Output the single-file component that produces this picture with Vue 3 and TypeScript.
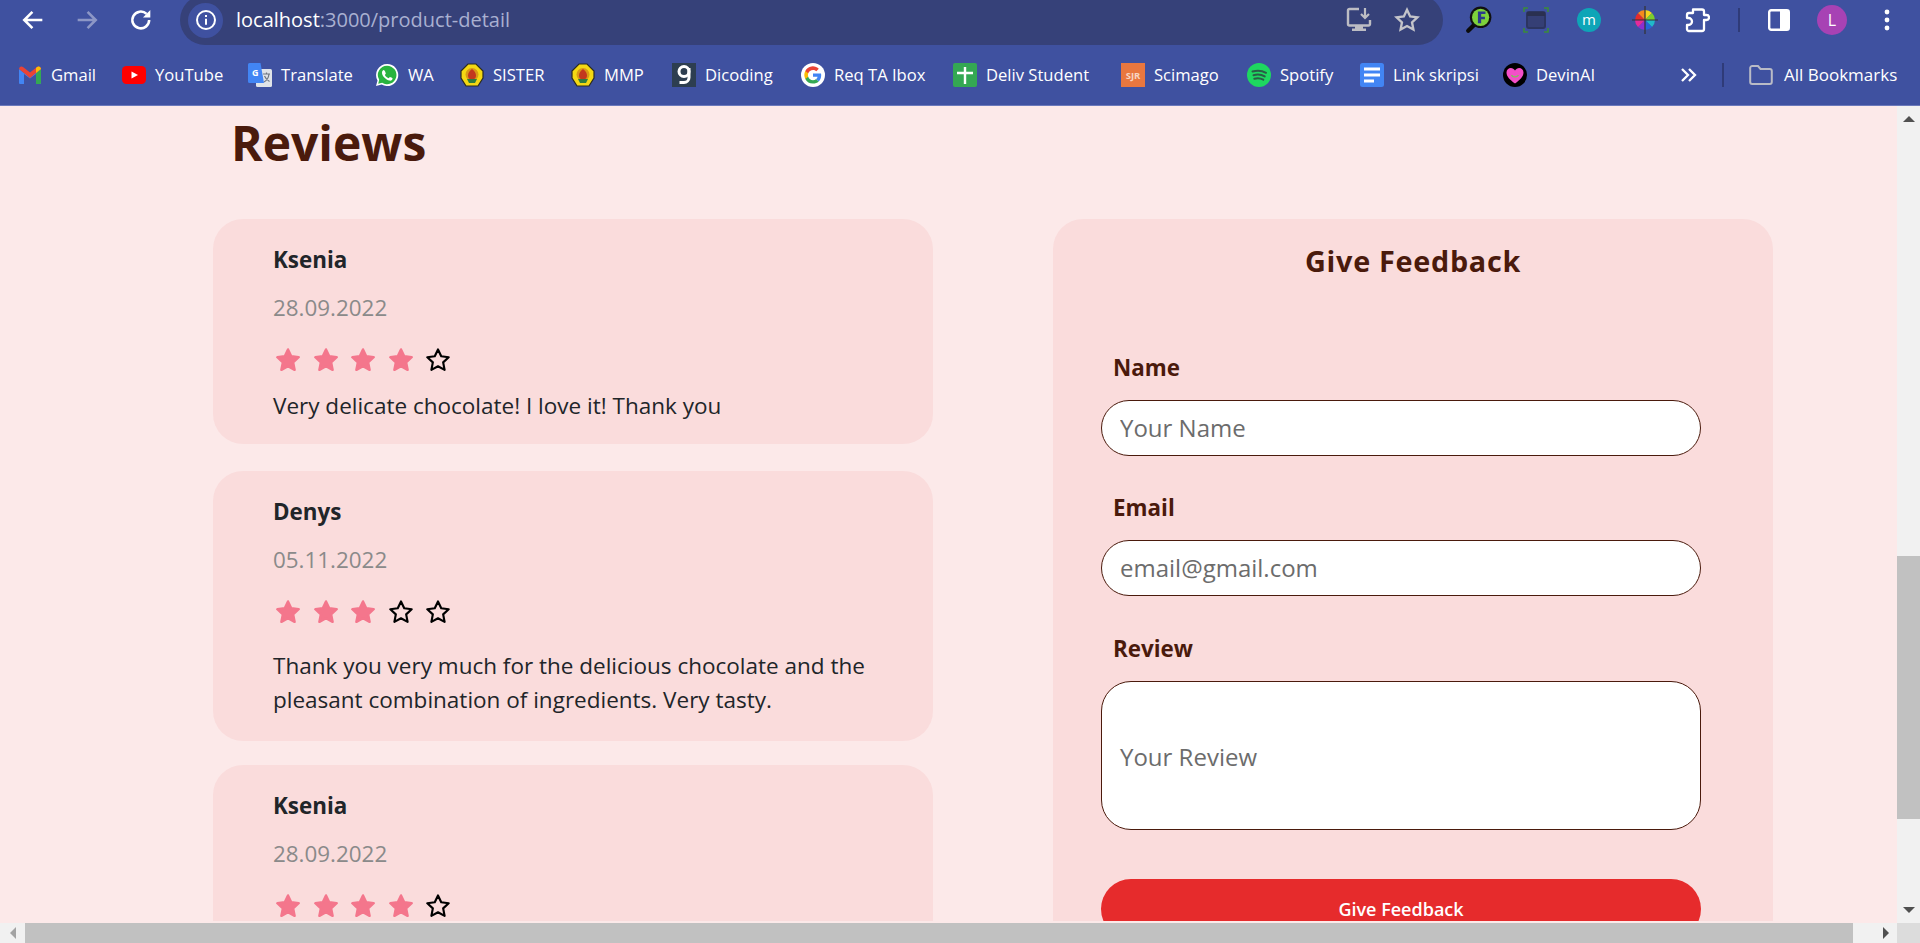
<script setup lang="ts">
interface Bookmark {
  label: string
  icon: string
  width: number
}

interface Review {
  name: string
  date: string
  rating: number
  text?: string
  wrapped?: boolean
}

const bookmarks: Bookmark[] = [
  { label: 'Gmail', icon: 'gmail', width: 104 },
  { label: 'YouTube', icon: 'youtube', width: 126 },
  { label: 'Translate', icon: 'translate', width: 127 },
  { label: 'WA', icon: 'whatsapp', width: 85 },
  { label: 'SISTER', icon: 'emblem', width: 111 },
  { label: 'MMP', icon: 'emblem', width: 101 },
  { label: 'Dicoding', icon: 'dicoding', width: 129 },
  { label: 'Req TA Ibox', icon: 'google', width: 152 },
  { label: 'Deliv Student', icon: 'cross', width: 168 },
  { label: 'Scimago', icon: 'sjr', width: 126 },
  { label: 'Spotify', icon: 'spotify', width: 113 },
  { label: 'Link skripsi', icon: 'docs', width: 143 },
  { label: 'DevinAI', icon: 'devin', width: 100 }
]

// the third card runs under the bottom of the window, its comment is never on screen
const reviews: Review[] = [
  { name: 'Ksenia', date: '28.09.2022', rating: 4, text: 'Very delicate chocolate! I love it! Thank you' },
  {
    name: 'Denys',
    date: '05.11.2022',
    rating: 3,
    text: 'Thank you very much for the delicious chocolate and the pleasant combination of ingredients. Very tasty.',
    wrapped: true
  },
  { name: 'Ksenia', date: '28.09.2022', rating: 4 }
]

const starPath = 'M12 3.2l2.7 5.7 6.2.8-4.6 4.3 1.2 6.2L12 17.2l-5.5 3 1.2-6.2-4.6-4.3 6.2-.8z'
</script>

<template>
  <div class="browser">
    <header class="toolbar">
      <div class="nav-buttons">
        <svg class="nav-icon" viewBox="0 0 24 24"><path d="M20 12H5M11.5 5L4.5 12l7 7" fill="none" stroke="#fff" stroke-width="2.2" /></svg>
        <svg class="nav-icon" viewBox="0 0 24 24"><path d="M4 12h15M12.5 5l7 7-7 7" fill="none" stroke="#8d97c6" stroke-width="2.2" /></svg>
        <svg class="nav-icon" viewBox="0 0 24 24"><path d="M19 12a7.2 7.2 0 1 1-2.2-5.2" fill="none" stroke="#fff" stroke-width="2.2" /><path d="M20 3.5v6.3h-6.3z" fill="#fff" /></svg>
      </div>
      <div class="address">
        <span class="site-info">
          <svg width="22" height="22" viewBox="0 0 22 22"><circle cx="11" cy="11" r="9" fill="none" stroke="#fff" stroke-width="2" /><path d="M11 9.8v6M11 6v2" stroke="#fff" stroke-width="2" /></svg>
        </span>
        <span class="url"><span class="host">localhost</span>:3000/product-detail</span>
        <svg class="addr-install" width="28" height="28" viewBox="0 0 28 28"><path d="M14 3H4.5A1.5 1.5 0 0 0 3 4.500V18a1.500 1.500 0 0 0 1.500 1.500h19A1.500 1.500 0 0 0 25 18v-4" fill="none" stroke="#bdbdc4" stroke-width="2.4" /><path d="M10 19.500h8v3h3V25H7v-2.500h3z" fill="#bdbdc4" /><path d="M20 2v9M16 8l4 4 4-4" fill="none" stroke="#bdbdc4" stroke-width="2.200" /></svg>
        <svg class="addr-star" width="28" height="28" viewBox="0 0 24 24"><path :d="starPath" fill="none" stroke="#c4c4ca" stroke-width="2" /></svg>
      </div>
      <div class="extensions">
        <svg class="ext lens" width="28" height="28" viewBox="0 0 26 26"><path d="M10 16l-7 7" stroke="#0b0b0b" stroke-width="4" stroke-linecap="round" /><circle cx="14.500" cy="10.500" r="10" fill="#111" /><circle cx="14.500" cy="10.500" r="8" fill="#7ed23c" /><path d="M12 5h7v2.500H15v2.500h3.500v2.300H15V16h-3z" fill="#2b3a8c" /></svg>
        <svg class="ext frame" width="26" height="26" viewBox="0 0 26 26"><rect x="4" y="5" width="18" height="16" rx="2" fill="#353f75" stroke="#2c3560" stroke-width="2" /><rect x="4" y="5" width="18" height="4" fill="#2a3050" /><path d="M1 5V1h4M21 1h4v4M25 21v4h-4M5 25H1v-4" fill="none" stroke="#3c8b3a" stroke-width="1.600" /></svg>
        <span class="ext m-badge">m</span>
        <svg class="ext wheel" width="26" height="30" viewBox="0 0 26 30">
          <path d="M13 15L13 5A10 10 0 0 1 20 8z" fill="#f6d31d" /><path d="M13 15L20 8A10 10 0 0 1 23 15z" fill="#7ccf2b" />
          <path d="M13 15H23A10 10 0 0 1 20 22z" fill="#21b8c9" /><path d="M13 15L20 22A10 10 0 0 1 13 25z" fill="#2566d8" />
          <path d="M13 15V25A10 10 0 0 1 6 22z" fill="#8a2fd0" /><path d="M13 15L6 22A10 10 0 0 1 3 15z" fill="#e42a9a" />
          <path d="M13 15H3A10 10 0 0 1 6 8z" fill="#e62b2b" /><path d="M13 15L6 8A10 10 0 0 1 13 5z" fill="#f58a1c" />
          <path d="M13 1v28M0 15h26" stroke="#333" stroke-width="1.200" />
        </svg>
        <svg class="ext puzzle" width="26" height="28" viewBox="0 0 26 28"><path d="M9 3.500h9a2 2 0 0 1 2 2V9h2.500a1.800 1.800 0 0 1 0 5H20v9a2 2 0 0 1-2 2H5a2 2 0 0 1-2-2v-4h1.500a3 3 0 0 0 0-7H3V9a2 2 0 0 1 2-2h4z" fill="none" stroke="#fff" stroke-width="2.300" stroke-linejoin="round" /></svg>
        <span class="divider"></span>
        <svg class="ext panel" width="22" height="22" viewBox="0 0 22 22"><rect x="1.200" y="1.200" width="19.600" height="19.600" rx="2" fill="none" stroke="#fff" stroke-width="2.400" /><rect x="12" y="1" width="9" height="20" rx="1" fill="#fff" /></svg>
        <span class="avatar">L</span>
        <svg class="ext dots" width="6" height="22" viewBox="0 0 6 22"><circle cx="3" cy="3" r="2.400" fill="#fff" /><circle cx="3" cy="11" r="2.400" fill="#fff" /><circle cx="3" cy="19" r="2.400" fill="#fff" /></svg>
      </div>
    </header>

    <nav class="bookmarks">
      <div v-for="b in bookmarks" :key="b.label" class="bookmark" :style="{ width: b.width + 'px' }">
        <svg v-if="b.icon === 'gmail'" class="fav" viewBox="0 0 24 24">
          <path d="M1 6l11 8.500L23 6v14a1 1 0 0 1-1 1h-4V11l-6 4.500L6 11v10H2a1 1 0 0 1-1-1z" fill="#4285f4" />
          <path d="M18 21V10.500l5-4.500v14a1 1 0 0 1-1 1z" fill="#34a853" />
          <path d="M1 6a2.500 2.500 0 0 1 4-2l7 5.500L19 4a2.500 2.500 0 0 1 4 2l-5 4-6 5-6-5z" fill="#ea4335" />
          <path d="M19 4a2.500 2.500 0 0 1 4 2l-5 4V5z" fill="#fbbc04" />
        </svg>
        <svg v-else-if="b.icon === 'youtube'" class="fav" viewBox="0 0 24 24">
          <rect y="3" width="24" height="18" rx="4.500" fill="#f00" /><path d="M9.500 8.500l6.500 3.500-6.500 3.500z" fill="#fff" />
        </svg>
        <svg v-else-if="b.icon === 'translate'" class="fav" viewBox="0 0 24 24">
          <rect x="8" y="6" width="16" height="18" rx="1.500" fill="#dfe3e8" /><path d="M15 11h7M18.500 9.500v1.500M16 19c3-1.500 4.500-4 5-8M16.500 13c1 2.500 2.500 4 5 5.500" fill="none" stroke="#6f7680" stroke-width="1.200" />
          <path d="M1.500 0h11L16 20H1.500A1.500 1.500 0 0 1 0 18.500V1.500A1.500 1.500 0 0 1 1.500 0z" fill="#4285f4" /><text x="4" y="13" class="fav-letter">G</text>
        </svg>
        <svg v-else-if="b.icon === 'whatsapp'" class="fav" viewBox="0 0 24 24">
          <path d="M12 1a11 11 0 0 0-9.500 16.500L1 23l5.700-1.500A11 11 0 1 0 12 1z" fill="#fff" />
          <path d="M12 2.800a9.200 9.200 0 0 0-7.800 14l-1 3.900 4-1A9.200 9.200 0 1 0 12 2.800z" fill="#29b43f" />
          <path d="M8.700 7c-.6 0-1.700 1-1.700 2.800 0 3 3.800 7.200 7.500 7.800 2 .3 3-1 3.100-2.100 0-.4-2.300-1.600-2.700-1.500-.5.100-.8 1.200-1.300 1.200-1 0-3.400-2.100-3.700-3.200-.1-.5.900-1 .9-1.500 0-.4-1-3.500-2.100-3.500z" fill="#fff" />
        </svg>
        <svg v-else-if="b.icon === 'emblem'" class="fav" viewBox="0 0 24 24">
          <path d="M8 1h8l7 7v7l-5 8H6l-5-8V8z" fill="#f4d813" stroke="#2b2b20" stroke-width="1.200" />
          <circle cx="12" cy="11.500" r="6.500" fill="#d99a16" /><path d="M12 6c2.500 2 4 4 4 6.500a4 4 0 0 1-8 0C8 10 9.500 8 12 6z" fill="#c3371e" /><path d="M7 16h10l-2 4H9z" fill="#2f7d3c" />
        </svg>
        <svg v-else-if="b.icon === 'dicoding'" class="fav" viewBox="0 0 24 24">
          <rect width="24" height="24" fill="#2d3e50" /><circle cx="12" cy="8.500" r="5" fill="none" stroke="#fff" stroke-width="3" /><path d="M17 5v9.500a5 5 0 0 1-5 5H7.500" fill="none" stroke="#fff" stroke-width="3" />
        </svg>
        <svg v-else-if="b.icon === 'google'" class="fav" viewBox="0 0 24 24">
          <circle cx="12" cy="12" r="12" fill="#fff" />
          <path d="M20.200 12.200c0-.6-.1-1.200-.2-1.700h-8v3.300h4.600a3.900 3.900 0 0 1-1.700 2.500l2.800 2.100c1.600-1.500 2.500-3.600 2.500-6.200z" fill="#4285f4" />
          <path d="M12 20.500c2.300 0 4.200-.8 5.700-2.100l-2.800-2.100c-.8.500-1.800.9-2.900.9-2.200 0-4.100-1.500-4.800-3.500H4.300v2.200A8.500 8.500 0 0 0 12 20.500z" fill="#34a853" />
          <path d="M7.200 13.700a5 5 0 0 1 0-3.400V8.100H4.300a8.500 8.500 0 0 0 0 7.800z" fill="#fbbc05" />
          <path d="M12 6.900c1.300 0 2.400.4 3.300 1.300l2.500-2.500A8.500 8.500 0 0 0 4.300 8.100l2.900 2.200c.7-2 2.600-3.400 4.800-3.400z" fill="#ea4335" />
        </svg>
        <svg v-else-if="b.icon === 'cross'" class="fav" viewBox="0 0 24 24">
          <rect width="24" height="24" rx="2" fill="#34a853" /><path d="M12 4v17M4 10h16" stroke="#fff" stroke-width="2.400" />
        </svg>
        <svg v-else-if="b.icon === 'sjr'" class="fav" viewBox="0 0 24 24">
          <rect width="24" height="24" fill="#e9773f" /><text x="12" y="16" text-anchor="middle" class="fav-sjr">SJR</text>
        </svg>
        <svg v-else-if="b.icon === 'spotify'" class="fav" viewBox="0 0 24 24">
          <circle cx="12" cy="12" r="12" fill="#1ed760" /><path d="M5.500 8.500c4.500-1.300 9.500-1 13.500 1.300M6.500 12.200c3.800-1.100 8-.7 11.200 1.200M7.300 15.700c3-.8 6.400-.5 9 1" fill="none" stroke="#2a5c46" stroke-width="2" stroke-linecap="round" />
        </svg>
        <svg v-else-if="b.icon === 'docs'" class="fav" viewBox="0 0 24 24">
          <rect width="24" height="24" rx="2.500" fill="#4285f4" /><path d="M4 6h16M4 12h16M4 18h10" stroke="#fff" stroke-width="2.800" />
        </svg>
        <svg v-else class="fav" viewBox="0 0 24 24">
          <circle cx="12" cy="12" r="12" fill="#000" /><path d="M12 20.500C7 17 3.500 13.500 3.500 9.500 3.500 6.500 5.700 5 7.800 5c1.800 0 3.200 1 4.200 2.500C13 6 14.400 5 16.200 5c2.100 0 4.300 1.500 4.300 4.500 0 4-3.500 7.500-8.500 11z" fill="#f44fc8" /><path d="M8.500 12c1 2.500 5.500 2.500 7 .2" fill="none" stroke="#7fc25a" stroke-width="1.300" />
        </svg>
        <span class="bm-label">{{ b.label }}</span>
      </div>
      <div class="bm-end">
        <svg class="chevrons" width="17" height="16" viewBox="0 0 17 16"><path d="M2 2l6 6-6 6M9 2l6 6-6 6" fill="none" stroke="#fff" stroke-width="2.300" /></svg>
        <span class="bm-sep"></span>
        <svg class="folder" width="24" height="22" viewBox="0 0 24 22"><path d="M1.200 4a2 2 0 0 1 2-2H9l2.500 3h9.300a2 2 0 0 1 2 2v11a2 2 0 0 1-2 2H3.200a2 2 0 0 1-2-2z" fill="none" stroke="#b9bbc6" stroke-width="2" /></svg>
        <span class="bm-label all">All Bookmarks</span>
      </div>
    </nav>

    <div class="content-row">
      <main class="page">
        <div class="page-scroll">
          <h1 class="title">Reviews</h1>
          <div class="columns">
            <section class="review-list">
              <article v-for="(r, i) in reviews" :key="i" class="review" :class="{ wrapped: r.wrapped }">
                <h3 class="review-name">{{ r.name }}</h3>
                <p class="review-date">{{ r.date }}</p>
                <div class="stars">
                  <svg v-for="n in 5" :key="n" class="star" viewBox="2 2 20 20">
                    <path v-if="n <= r.rating" :d="starPath" fill="#f4768c" stroke="#f4768c" stroke-width="2" stroke-linejoin="round" />
                    <path v-else :d="starPath" fill="none" stroke="#000" stroke-width="1.800" stroke-linejoin="round" />
                  </svg>
                </div>
                <p v-if="r.text" class="review-text">{{ r.text }}</p>
              </article>
            </section>

            <section class="feedback">
              <h2 class="feedback-title">Give Feedback</h2>
              <form class="feedback-form" @submit.prevent>
                <label class="field-label">Name</label>
                <input class="field" type="text" placeholder="Your Name" />
                <label class="field-label">Email</label>
                <input class="field email" type="text" placeholder="email@gmail.com" />
                <label class="field-label">Review</label>
                <textarea class="field area" placeholder="Your Review"></textarea>
                <button class="submit" type="submit">Give Feedback</button>
              </form>
            </section>
          </div>
        </div>
      </main>
      <aside class="vscroll">
        <span class="arrow-up"></span>
        <span class="vtrack"><span class="vthumb"></span></span>
        <span class="arrow-down"></span>
      </aside>
    </div>

    <footer class="hscroll">
      <span class="hbtn"><span class="arrow-left"></span></span>
      <span class="hthumb"></span>
      <span class="hbtn right"><span class="arrow-right"></span></span>
      <span class="corner"></span>
    </footer>
  </div>
</template>

<style>
html,
body {
  margin: 0;
  overflow: hidden;
}
</style>

<style scoped>
.browser {
  width: 1920px;
  height: 943px;
  display: flex;
  flex-direction: column;
  overflow: hidden;
  font-family: "Open Sans", "Noto Sans", sans-serif;
  background: #fce9e9;
}

/* browser top */
.toolbar {
  height: 45px;
  flex: none;
  display: flex;
  background: #3f51a0;
  overflow: hidden;
}

.nav-buttons {
  width: 180px;
  flex: none;
  display: flex;
  align-items: center;
  height: 40px;
  padding-left: 19px;
  gap: 26px;
  box-sizing: border-box;
}

.nav-icon {
  width: 28px;
  height: 28px;
}

.address {
  width: 1263px;
  height: 50px;
  margin-top: -5px;
  flex: none;
  display: flex;
  align-items: center;
  padding-left: 8px;
  box-sizing: border-box;
  border-radius: 25px;
  background: #364179;
}

.site-info {
  width: 35px;
  height: 35px;
  border-radius: 50%;
  display: flex;
  align-items: center;
  justify-content: center;
  background: #3f51a0;
}

.url {
  margin-left: 13px;
  margin-bottom: 2px;
  font-size: 20px;
  color: #a9b0d1;
  flex: 1;
}

.host {
  color: #fff;
}

.addr-install {
  margin-right: 20px;
}

.addr-star {
  margin-right: 22px;
}

.extensions {
  flex: 1;
  display: flex;
  align-items: center;
  height: 40px;
}

.ext {
  flex: none;
}

.lens {
  margin-left: 22px;
}

.frame {
  margin-left: 30px;
}

.m-badge {
  width: 24px;
  height: 24px;
  margin-left: 28px;
  border-radius: 50%;
  background: #0ea5b7;
  color: #fff;
  font-size: 15px;
  line-height: 22px;
  text-align: center;
}

.wheel {
  margin-left: 31px;
}

.puzzle {
  margin-left: 26px;
}

.divider {
  width: 2px;
  height: 24px;
  margin-left: 28px;
  background: #2f3b78;
}

.panel {
  margin-left: 28px;
}

.avatar {
  width: 30px;
  height: 30px;
  margin-left: 27px;
  border-radius: 50%;
  background: #a742b4;
  color: #fff;
  font-size: 16px;
  line-height: 30px;
  text-align: center;
}

.dots {
  margin-left: 37px;
}

/* bookmark bar */
.bookmarks {
  height: 60px;
  flex: none;
  display: flex;
  align-items: center;
  padding-left: 18px;
  box-sizing: content-box;
  background: #3f51a0;
  border-bottom: 1px solid #6b79bb;
}

.bookmark {
  flex: none;
  display: flex;
  align-items: center;
  gap: 9px;
}

.fav {
  width: 24px;
  height: 24px;
  flex: none;
}

.fav-letter {
  font-family: "Open Sans", sans-serif;
  font-size: 9px;
  font-weight: 700;
  fill: #fff;
}

.fav-sjr {
  font-family: "Open Sans", sans-serif;
  font-size: 9.5px;
  font-weight: 700;
  fill: #f7d5c3;
}

.bm-label {
  margin-bottom: 2px;
  font-size: 16.6px;
  color: #fff;
  white-space: nowrap;
}

.bm-label.all {
  font-size: 17px;
}

.bm-end {
  display: flex;
  align-items: center;
  flex: none;
  margin-left: 77px;
}

.bm-sep {
  width: 2px;
  height: 24px;
  margin-left: 25px;
  background: #2f3b78;
}

.folder {
  margin-left: 25px;
  margin-right: 11px;
}

/* page */
.content-row {
  flex: 1;
  min-height: 0;
  display: flex;
}

.page {
  flex: 1;
  min-width: 0;
  padding-bottom: 2px;
  display: flex;
}

.page-scroll {
  flex: 1;
  overflow: hidden;
  padding: 8px 0 0 213px;
}

.title {
  margin: 0 0 47px 18px;
  font-size: 48px;
  line-height: 58px;
  font-weight: 700;
  color: #4a1a0c;
}

.columns {
  display: flex;
  gap: 120px;
  align-items: flex-start;
}

.review-list {
  width: 720px;
  flex: none;
  display: flex;
  flex-direction: column;
  gap: 24px;
}

.review {
  padding: 24px 60px 21px;
  border-radius: 30px;
  background: #fadcdc;
  color: #212529;
}

.review:first-child {
  margin-bottom: 3px;
}

.review:last-child {
  padding-bottom: 80px;
}

.review.wrapped {
  padding-bottom: 24px;
}

.review-name {
  margin: 0 0 14px;
  font-size: 22.4px;
  line-height: 34px;
  font-weight: 700;
}

.review-date {
  margin: 0;
  font-size: 22.4px;
  line-height: 34px;
  color: #8a8a8a;
}

.stars {
  display: flex;
  gap: 13.5px;
  margin-top: 23px;
  margin-left: 3px;
}

.star {
  width: 24px;
  height: 24px;
  flex: none;
}

.review-text {
  margin: 17px 0 0;
  font-size: 22.5px;
  line-height: 34px;
}

.review.wrapped .review-text {
  margin-top: 25px;
}

.feedback {
  width: 720px;
  flex: none;
  padding: 23px 48px 60px;
  box-sizing: border-box;
  border-radius: 30px;
  background: #fadcdc;
}

.feedback-title {
  margin: 0;
  text-align: center;
  font-size: 28.8px;
  line-height: 38px;
  font-weight: 700;
  letter-spacing: 0.7px;
  color: #4a1a0c;
}

.feedback-form {
  display: flex;
  flex-direction: column;
  padding-top: 71px;
}

.field-label {
  margin: 0 0 15px 12px;
  font-size: 22.4px;
  line-height: 34px;
  font-weight: 700;
  color: #4a1a0c;
}

.field {
  width: 600px;
  height: 56px;
  padding: 0 18px 2px;
  margin-bottom: 35px;
  box-sizing: border-box;
  border: 1px solid #4a1a0c;
  border-radius: 28px;
  outline: none;
  background: #fff;
  font-family: inherit;
  font-size: 24px;
  color: #495057;
}

.field.email {
  margin-bottom: 36px;
}

.field::placeholder {
  color: #6c6c6c;
  opacity: 1;
}

.area {
  height: 149px;
  padding-top: 60px;
  margin-bottom: 49px;
  border-radius: 30px;
  resize: none;
  overflow: hidden;
  line-height: 30px;
}

.submit {
  width: 600px;
  height: 60px;
  border: none;
  border-radius: 30px;
  background: #e62b2c;
  color: #fff;
  font-family: inherit;
  font-size: 18px;
  font-weight: 600;
}

/* scrollbars */
.vscroll {
  width: 23px;
  flex: none;
  display: flex;
  flex-direction: column;
  align-items: center;
  background: #f1f1f1;
}

.arrow-up {
  width: 0;
  height: 0;
  margin-top: 10px;
  border-left: 6px solid transparent;
  border-right: 6px solid transparent;
  border-bottom: 6px solid #505050;
  flex: none;
}

.arrow-down {
  width: 0;
  height: 0;
  margin-bottom: 10px;
  border-left: 6px solid transparent;
  border-right: 6px solid transparent;
  border-top: 6px solid #505050;
  flex: none;
}

.vtrack {
  flex: 1;
  width: 100%;
  padding-top: 434px;
  padding-bottom: 88px;
  box-sizing: border-box;
  display: flex;
}

.vthumb {
  flex: 1;
  background: #c1c1c1;
}

.hscroll {
  height: 20px;
  flex: none;
  display: flex;
  background: #f1f1f1;
}

.hbtn {
  width: 25px;
  flex: none;
  display: flex;
  align-items: center;
  justify-content: center;
}

.hbtn.right {
  width: 44px;
  justify-content: flex-end;
  padding-right: 8px;
  box-sizing: border-box;
}

.hthumb {
  width: 1828px;
  flex: none;
  background: #c1c1c1;
}

.arrow-left {
  border-top: 6px solid transparent;
  border-bottom: 6px solid transparent;
  border-right: 6px solid #a3a3a3;
}

.arrow-right {
  border-top: 6px solid transparent;
  border-bottom: 6px solid transparent;
  border-left: 6px solid #505050;
}

.corner {
  flex: 1;
  background: #dcdcdc;
}
</style>
